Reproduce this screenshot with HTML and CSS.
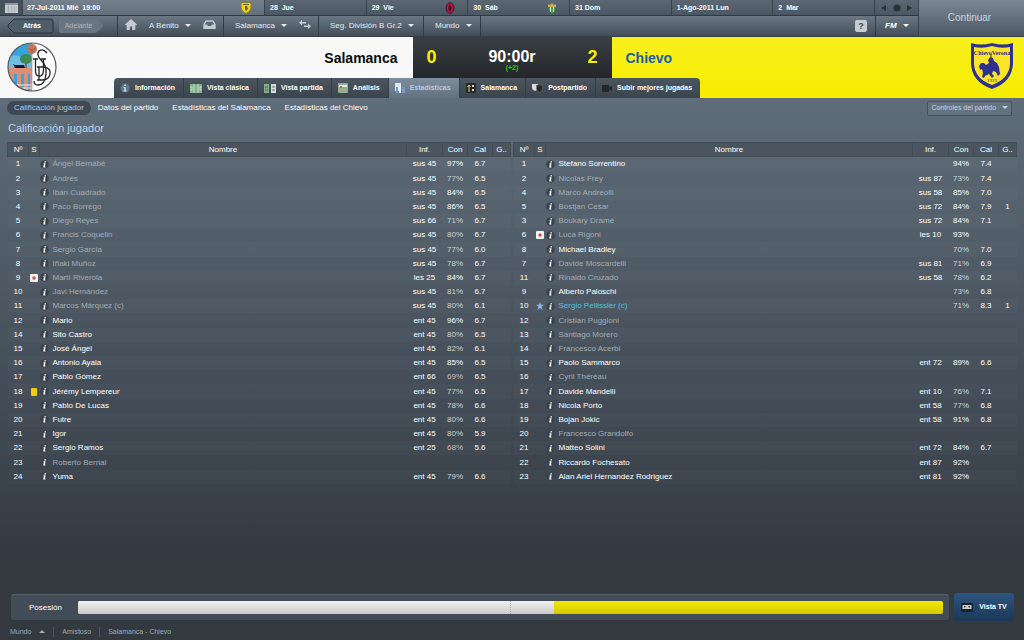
FILE: index.html
```
<!DOCTYPE html>
<html lang="es">
<head>
  <meta charset="UTF-8">
  <title>Salamanca - Chievo</title>
  <link rel="stylesheet" href="styles.css">
</head>
<body>
  <header class="top">
    <div class="top-main">
      <div class="calendar">
        <button class="cal-icon" aria-label="Calendario">
          <svg width="13" height="11" viewBox="0 0 13 11"><path fill="#c9cfd4" d="M0 1h13v10H0z"/><path fill="#8d969e" d="M0 1h13v2H0z"/><path stroke="#a3abb2" stroke-width=".6" d="M1 5h11M1 7h11M1 9h11M3.5 3.5v7M6.5 3.5v7M9.5 3.5v7"/></svg>
        </button>
        <div class="day today">27-Jul-2011 Mié&nbsp; 19:00
          <svg width="12" height="13" viewBox="0 0 12 13"><path fill="#f0d21c" stroke="#8a7a20" d="M1 1.5h10v5q0 4-5 6-5-2-5-6z"/><path fill="#6b6440" d="M3 3h6v1H3zM5 5h2l1 3-2 2-1-2z"/></svg>
        </div>
        <div class="day">28&nbsp; Jue</div>
        <div class="day">29&nbsp; Vie
          <svg width="10" height="12" viewBox="0 0 10 12"><ellipse cx="5" cy="6" rx="4.2" ry="5.5" fill="#c3142e"/><ellipse cx="5" cy="6" rx="4" ry="5.2" fill="none" stroke="#232650"/><ellipse cx="5" cy="6" rx="1.5" ry="3" fill="#1d2045"/></svg>
        </div>
        <div class="day">30&nbsp; Sáb
          <svg width="10" height="12" viewBox="0 0 10 12"><path fill="#3ea33a" d="M1 4h8L7.5 9 5 12 2.5 9z"/><path stroke="#e8eee8" d="M3.5 5v5M6.5 5v5"/><path fill="#c9ad55" d="M1 5V2l2 1 2-2 2 2 2-1v3z"/></svg>
        </div>
        <div class="day">31 Dom</div>
        <div class="day">1-Ago-2011 Lun</div>
        <div class="day">2&nbsp; Mar</div>
        <div class="day-nav">
          <button aria-label="Anterior"><svg width="5" height="6" viewBox="0 0 5 6"><path fill="#2b3238" d="M5 0v6L0 3z"/></svg></button>
          <button aria-label="Hoy"><svg width="8" height="8" viewBox="0 0 8 8"><circle cx="4" cy="4" r="3.5" fill="#2b3034"/></svg></button>
          <button aria-label="Siguiente"><svg width="5" height="6" viewBox="0 0 5 6"><path fill="#2b3238" d="M0 0v6l5-3z"/></svg></button>
        </div>
      </div>

      <nav class="menu">
        <div class="history">
          <button class="back">
            <svg width="47" height="16" viewBox="0 0 47 16"><path fill="#4f5d6b" stroke="#26303a" d="M8.500 1H44q2 0 2 2v10q0 2-2 2H8.500q-2 0-3-1.500L1.500 9.500q-1-1.500 0-3L5.500 2.500q1-1.500 3-1.500z"/></svg>
            <span>Atrás</span>
          </button>
          <button class="forward">
            <svg width="46" height="16" viewBox="0 0 46 16"><path fill="#697682" d="M3 1h33q2 0 3 1l5 4q2 2 0 4l-5 4q-1 1-3 1H3q-2 0-2-2V3q0-2 2-2z"/></svg>
            <span>Adelante</span>
          </button>
        </div>
        <div class="menu-group manager">
          <button aria-label="Inicio"><svg width="12" height="11" viewBox="0 0 12 11"><path fill="#c3cbd3" d="M6 0l6 5.500-1 1-.7-.6V11H7.200V7.500H4.800V11H1.700V5.900l-.7.600-1-1z"/></svg></button>
          <button>A Benito <i class="caret"></i></button>
          <button aria-label="Bandeja"><svg width="13" height="9" viewBox="0 0 13 9"><path fill="none" stroke="#c3cbd3" stroke-width="1.400" d="M1 4.500L3 1h7l2 3.500v3.700H1z"/><path fill="#c3cbd3" d="M1 4.500h3l1 1.500h3l1-1.500h3V8H1z"/></svg></button>
        </div>
        <div class="menu-group club">
          <button>Salamanca <i class="caret"></i></button>
          <button aria-label="Cambiar"><svg width="12" height="9" viewBox="0 0 12 9"><path fill="#c3cbd3" d="M3 0v2h4v1.500H3v2L0 2.700zM9 3.500v2H5V7h4v2l3-2.800z"/></svg></button>
        </div>
        <div class="menu-group league"><button>Seg. División B Gr.2 <i class="caret"></i></button></div>
        <div class="menu-group world"><button>Mundo <i class="caret"></i></button></div>
        <button class="help">?</button>
        <button class="fm">FM <i class="caret"></i></button>
      </nav>
    </div>
    <button class="continue">Continuar</button>
  </header>

  <section class="match">
    <div class="team home">
      <svg class="crest" width="50" height="50" viewBox="0 0 50 50">
        <clipPath id="leftHalf"><path d="M25 1A24 24 0 0 0 25 49z"/></clipPath>
        <circle cx="25" cy="25" r="24" fill="#fff"/>
        <g clip-path="url(#leftHalf)">
          <path fill="#35a4dc" d="M0 0h25v50H0z"/>
          <path fill="#6fbce4" d="M0 16q8-5 14-1t11-3v14H0z"/>
          <path fill="#df8d73" d="M0 26h25v6H0zM3 30h4v14H3zM10 30h4v17h-4zM17 30h4v19h-4zM23 30h2v19h-2z"/>
          <path stroke="#e9f3f8" d="M0 43h25M3 46h22"/>
          <ellipse cx="19" cy="17" rx="6" ry="5" fill="#3d8b52"/>
          <path stroke="#85593f" stroke-width="1.500" d="M19 20v6"/>
          <path fill="#131820" d="M6 22l2 1h9l1 3H8z"/>
        </g>
        <circle cx="25" cy="25" r="24" fill="none" stroke="#56595c" stroke-width="1.200"/>
        <path stroke="#999" stroke-width=".7" d="M25 2v46"/>
        <circle cx="25" cy="7" r="5" fill="#c4785b"/>
        <path fill="none" stroke="#8e4d3a" stroke-width=".6" d="M21 6l4 2 4-2M25 8v4"/>
        <g fill="none" stroke="#222" stroke-width="1.300">
          <path d="M40 11q-4-5-8-2-3 4 2 9 6 6 5 14-1 11-8 11-4 0-4-4"/>
          <path d="M26 17h5M28.500 17v13q1 5 5 4 3-1 3-6V17M34 17h5"/>
          <path d="M32 25v13M30 25h7q7 1 6 7-1 6-8 6h-5"/>
        </g>
      </svg>
      <span class="team-name">Salamanca</span>
    </div>
    <div class="score">
      <span class="goals">0</span>
      <div class="clock">90:00r<small>(+2)</small></div>
      <span class="goals">2</span>
    </div>
    <div class="team away">
      <span class="team-name">Chievo</span>
      <svg class="crest" width="44" height="48" viewBox="0 0 44 48">
        <path fill="#2f3192" d="M1 1q10 3 21 0 11 3 21 0v21Q42 40 22 47 2 40 1 22z"/>
        <path fill="#fbe42a" d="M4 5q9 2 18-1 9 3 18 1v17q-1 15-18 21Q5 37 4 22z"/>
        <text x="22" y="13" text-anchor="middle" class="crest-name">ChievoVerona</text>
        <path fill="#2f3192" d="M20 15l3 1 1 3 3 2 2 4 1 7-2 2-2-4-3-1-1 3 2 2-2 2-3-4-4 2-1 2-2-1 1-4-1-4-2 1-1-4 2-3 3 0 2 2 3-2-1-3z"/>
        <path stroke="#2f3192" d="M21 12v10"/>
        <text x="22" y="40" text-anchor="middle" class="crest-year">1929</text>
      </svg>
    </div>
    <nav class="tabs">
      <a href="#"><svg width="10" height="10" viewBox="0 0 10 10"><circle cx="5" cy="5" r="4.600" fill="#5c748c"/><path fill="#dfe8f0" d="M4.300 1.500h1.500V3H4.300zM3.500 4h2.200v3.500h.8v1h-3v-1h.8V5h-.8z"/></svg>Información</a>
      <a href="#"><svg width="12" height="9" viewBox="0 0 12 9"><path fill="#7fae8a" d="M0 0h12v9H0z"/><path fill="none" stroke="#dbe9de" stroke-width=".8" d="M4 0v9M8 0v9M0 3h2v3H0M12 3h-2v3h2"/></svg>Vista clásica</a>
      <a href="#"><svg width="12" height="9" viewBox="0 0 12 9"><path fill="#7fae8a" d="M0 0h5v9H0z"/><path fill="#d5dadd" d="M7 0h5v9H7z"/><path stroke="#3f4b52" stroke-width=".7" d="M1 3h3M1 6h3M8 3h3M8 6h3"/></svg>Vista partida</a>
      <a href="#"><svg width="10" height="10" viewBox="0 0 10 10"><rect width="10" height="10" rx="1" fill="#8fae92"/><path fill="#dfe8dc" d="M1 2h8v2H1z"/><path fill="none" stroke="#d7a53d" d="M2 8l3-2 3 1"/><circle cx="3" cy="4" r="1" fill="#b44"/></svg>Análisis</a>
      <a href="#" class="active"><svg width="10" height="10" viewBox="0 0 10 10"><path fill="#dce6ef" d="M0 0h6v8H0z"/><path fill="#6f9cc5" d="M1 4h2v6H1zM7 4h3v6H7z"/><path fill="#e9f1f8" d="M4 2h2v8H4z"/></svg>Estadísticas</a>
      <a href="#"><svg width="10" height="10" viewBox="0 0 10 10"><rect width="10" height="10" rx="1" fill="#25292c"/><path fill="none" stroke="#e2cf58" d="M3 9V3M1.500 4L3 2l1.500 2"/><path fill="#d8d8d8" d="M6 2h2v2H6zM6 6h2v2H6z"/></svg>Salamanca</a>
      <a href="#"><svg width="11" height="10" viewBox="0 0 11 10"><path fill="#d9dcde" d="M0 1h6v4q0 2-3 3-3-1-3-3z"/><path fill="#24292d" stroke="#777" stroke-width=".5" d="M4.500 2h6v4q0 2-3 3.500-3-1.500-3-3.500z"/></svg>Postpartido</a>
      <a href="#"><svg width="10" height="7" viewBox="0 0 10 7"><path fill="#23292e" d="M0 0h7v2l3-1v5L7 5v2H0z"/></svg>Subir mejores jugadas</a>
    </nav>
  </section>

  <main>
    <div class="subnav">
      <a href="#" class="active">Calificación jugador</a>
      <a href="#">Datos del partido</a>
      <a href="#">Estadísticas del Salamanca</a>
      <a href="#">Estadísticas del Chievo</a>
      <button class="controls">Controles del partido <i class="caret"></i></button>
    </div>
    <h1>Calificación jugador</h1>
    <div class="tables">
      <table id="home"></table>
      <table id="away"></table>
    </div>
  </main>

  <footer>
    <div class="bottom">
      <div class="possession">
        <span>Posesión</span>
        <div class="bar"><div class="bar-home" style="width: 55%"></div></div>
      </div>
      <button class="tv">
        <svg width="12" height="9" viewBox="0 0 12 9"><rect width="12" height="9" rx="1.500" fill="#1a2025"/><path fill="#c9cdd0" d="M1.500 2h9v4h-9z"/><path fill="#30363b" d="M3 3h1.500v1.500H3zM7.500 3H9v1.500H7.500z"/></svg>
        Vista TV
      </button>
    </div>
    <nav class="crumbs">
      <a href="#">Mundo <i class="caret up"></i></a>
      <a href="#">Amistoso</a>
      <a href="#">Salamanca - Chievo</a>
    </nav>
  </footer>

  <script src="script.js"></script>
</body>
</html>
```
FILE: styles.css
```
* {
  box-sizing: border-box;
}

body {
  margin: 0;
  min-height: 100vh;
  display: flex;
  flex-direction: column;
  font-family: "Liberation Sans", Arial, sans-serif;
  font-size: 8px;
  line-height: 10px;
  color: #fff;
  background: linear-gradient(#606e7b 90px, #5a6773 150px, #3a424b 490px, #32393f 560px, #32393f);
}

button {
  font: inherit;
  color: inherit;
  background: none;
  border: none;
  padding: 0;
  cursor: pointer;
}

a {
  color: inherit;
  text-decoration: none;
}

svg {
  flex: none;
}

.caret {
  display: inline-block;
  border: 3px solid transparent;
  border-top-color: currentColor;
  border-bottom: none;
  margin-left: 4px;
  vertical-align: 1px;
}

.caret.up {
  margin-left: 6px;
  border-top: none;
  border-bottom: 3px solid currentColor;
}

/* top bar */
.top {
  display: flex;
  height: 37px;
  border-bottom: 1px solid #363f48;
}

.top-main {
  flex: 1;
}

.calendar {
  display: flex;
  height: 16px;
  font-size: 7px;
  font-weight: bold;
  background: linear-gradient(#5b6873, #4b5762);
  border-bottom: 1px solid #303942;
}

.cal-icon {
  width: 22px;
  display: flex;
  align-items: center;
  justify-content: center;
  background: #46515c;
}

.day {
  flex: 1;
  display: flex;
  align-items: center;
  justify-content: space-between;
  padding: 0 12px 0 5px;
  border-left: 1px solid #3a444d;
}

.day.today {
  flex: none;
  width: 242px;
  padding-left: 4px;
  background: linear-gradient(#74818d, #64717d);
}

.day-nav {
  width: 44px;
  display: flex;
  align-items: center;
  justify-content: space-evenly;
  border-left: 1px solid #3a444d;
}

.day-nav button {
  display: flex;
}

.menu {
  display: flex;
  align-items: center;
  height: 20px;
  background: linear-gradient(#6b7884, #424d57);
  color: #e6ebef;
}

.history {
  width: 117px;
  display: flex;
  gap: 4px;
  padding-left: 7px;
}

.back,
.forward {
  display: grid;
  align-items: center;
  justify-items: center;
}

.back > *,
.forward > * {
  grid-area: 1 / 1;
}

.back span {
  padding-left: 3px;
  font-weight: bold;
  font-size: 7px;
  color: #fff;
}

.forward span {
  padding-right: 5px;
  font-size: 7px;
  color: #a9b4be;
}

.menu-group {
  height: 20px;
  display: flex;
  align-items: center;
  justify-content: space-between;
  padding: 0 7px;
  border-left: 1px solid #323c45;
}

.menu-group.manager {
  width: 106px;
}

.menu-group.club {
  width: 95px;
  padding-left: 11px;
}

.menu-group.league {
  width: 105px;
  padding-left: 11px;
}

.menu-group.world {
  width: 58px;
  padding-left: 11px;
  border-right: 1px solid #323c45;
}

.help {
  width: 12px;
  height: 12px;
  margin-left: auto;
  margin-right: 8px;
  border-radius: 2px;
  background: #c5ccd2;
  color: #3c464f;
  font-size: 9px;
  font-weight: bold;
}

.fm {
  width: 43px;
  height: 20px;
  border-left: 1px solid #323c45;
  font-style: italic;
  font-weight: bold;
  color: #fff;
}

.continue {
  width: 106px;
  padding: 0 4px 0 0;
  border-left: 1px solid #39434c;
  background: linear-gradient(#7b8894, #4c5863);
  color: #c6d5e4;
  font-size: 10px;
}

/* scoreboard */
.match {
  position: relative;
  display: grid;
  grid-template-columns: 1fr 199px 1fr;
  height: 61px;
}

.team {
  display: flex;
  justify-content: space-between;
}

.team.home {
  padding: 5px 15px 0 7px;
  background: #f8f8f8;
}

.team.away {
  padding: 5px 10px 0 14px;
  background: linear-gradient(#f8f01c, #f7ed00);
}

.team-name {
  padding-top: 7px;
  font-size: 14px;
  line-height: 18px;
  font-weight: bold;
  color: #0c0c0c;
}

.away .team-name {
  color: #1560a8;
}

.crest-name {
  font: bold 6px "Liberation Serif", serif;
  fill: #2f3192;
}

.crest-year {
  font: 5px "Liberation Serif", serif;
  fill: #2f3192;
}

.score {
  display: flex;
  justify-content: space-between;
  padding: 10px 14px 0;
  background: linear-gradient(#3a3f43, #23272a 41px);
  font-size: 16px;
  line-height: 20px;
}

.goals {
  font-size: 18px;
  font-weight: bold;
  color: #fbf000;
}

.clock {
  text-align: center;
  font-weight: bold;
  color: #fff;
}

.clock small {
  display: block;
  font-size: 7px;
  line-height: 2px;
  color: #10d810;
}

.tabs {
  position: absolute;
  left: 114px;
  bottom: 0;
  display: flex;
  height: 20px;
  border-radius: 4px 4px 0 0;
  overflow: hidden;
  background: linear-gradient(#4b5660, #3b444d);
  font-size: 7px;
  font-weight: bold;
}

.tabs a {
  display: flex;
  align-items: center;
  gap: 5px;
  padding: 0 8px 0 6px;
  border-right: 1px solid #353e46;
}

.tabs a:last-child {
  border-right: none;
}

.tabs .active {
  background: linear-gradient(#7d8d9d, #64727f);
  color: #b4cbe2;
}

/* content */
main {
  padding: 0 7px;
}

.subnav {
  display: flex;
  align-items: center;
  height: 20px;
  gap: 14px;
}

.subnav .active {
  margin-right: -7px;
  padding: 2px 7px;
  border-radius: 7px;
  background: #3e4953;
  color: #b4cbe2;
}

.controls {
  height: 15px;
  margin-left: auto;
  margin-right: 5px;
  padding: 0 3px;
  border: 1px solid #46525d;
  border-radius: 2px;
  background: #657380;
  color: #c3d5e8;
  font-size: 7px;
}

h1 {
  margin: 3px 1px 7px;
  font-size: 11px;
  line-height: 14px;
  font-weight: normal;
  color: #bfd5ec;
}

.tables {
  display: grid;
  grid-template-columns: 1fr 1fr;
  gap: 2px;
}

table {
  width: 100%;
  height: 342px;
  table-layout: fixed;
  border-collapse: collapse;
}

th,
td {
  padding: 0;
  text-align: center;
  font-weight: normal;
}

th {
  height: 14px;
  background: #4a555f;
  border: 1px solid #414c55;
}

tbody tr:nth-child(odd) {
  background: rgba(255, 255, 255, 0.02);
}

td svg {
  display: block;
  margin: auto;
}

.num {
  width: 21px;
}

.status {
  width: 11px;
}

.inf {
  width: 36px;
}

.con,
.cal {
  width: 25px;
}

.g {
  width: 18px;
}

td.name > div {
  display: flex;
  align-items: center;
  gap: 4px;
}

td.name svg {
  margin: 0;
}

.off td.name {
  color: #a3adb5;
}

.best td.name {
  color: #4fc0e4;
}

.fit {
  color: #fff;
}

.ok {
  color: #d2d3d5;
}

.tired {
  color: #d8b9b9;
}

/* bottom */
footer {
  margin-top: auto;
  padding: 0 10px 0 11px;
}

.bottom {
  display: flex;
  align-items: center;
  gap: 5px;
}

.possession {
  flex: 1;
  display: flex;
  align-items: center;
  gap: 16px;
  height: 26px;
  padding: 0 6px 0 18px;
  border-top: 1px solid #56636d;
  border-radius: 3px;
  background: #414c57;
}

.bar {
  position: relative;
  flex: 1;
  height: 13px;
  border-radius: 2px;
  overflow: hidden;
  background: linear-gradient(#f3e900, #d2c800);
}

.bar::after {
  content: "";
  position: absolute;
  left: 50%;
  top: 0;
  height: 100%;
  border-left: 1px dotted #aaa;
}

.bar-home {
  height: 100%;
  background: linear-gradient(#f0f0f0, #cacaca);
}

.tv {
  width: 60px;
  height: 28px;
  display: flex;
  align-items: center;
  justify-content: center;
  gap: 6px;
  border-radius: 3px;
  background: linear-gradient(#2d557f, #1b3858);
  color: #fff;
  font-size: 7px;
  font-weight: bold;
}

.crumbs {
  display: flex;
  height: 19px;
  padding-top: 3px;
  align-items: center;
  margin-left: -1px;
  color: #a0abb4;
  font-size: 7px;
}

.crumbs a {
  padding: 0 8px;
  border-left: 1px solid #4a545d;
}

.crumbs a:first-child {
  padding-left: 0;
  border-left: none;
}
```
FILE: script.js
```
// number, name, row class, info, condition, rating, goals, status icon
const home = [
  [1, "Ángel Bernabé", "off", "sus 45", 97, "6.7"],
  [2, "Andrés", "off", "sus 45", 77, "6.5"],
  [3, "Ibán Cuadrado", "off", "sus 45", 84, "6.5"],
  [4, "Paco Borrego", "off", "sus 45", 86, "6.5"],
  [5, "Diego Reyes", "off", "sus 66", 71, "6.7"],
  [6, "Francis Coquelin", "off", "sus 45", 80, "6.7"],
  [7, "Sergio García", "off", "sus 45", 77, "6.0"],
  [8, "Iñaki Muñoz", "off", "sus 45", 78, "6.7"],
  [9, "Martí Riverola", "off", "les 25", 84, "6.7", "", "injury"],
  [10, "Javi Hernández", "off", "sus 45", 81, "6.7"],
  [11, "Marcos Márquez (c)", "off", "sus 45", 80, "6.1"],
  [12, "Mario", "", "ent 45", 96, "6.7"],
  [14, "Sito Castro", "", "ent 45", 80, "6.5"],
  [15, "José Ángel", "", "ent 45", 82, "6.1"],
  [16, "Antonio Ayala", "", "ent 45", 85, "6.5"],
  [17, "Pablo Gómez", "", "ent 66", 69, "6.5"],
  [18, "Jérémy Lempereur", "", "ent 45", 77, "6.5", "", "yellow"],
  [19, "Pablo De Lucas", "", "ent 45", 78, "6.6"],
  [20, "Futre", "", "ent 45", 80, "6.6"],
  [21, "Igor", "", "ent 45", 80, "5.9"],
  [22, "Sergio Ramos", "", "ent 25", 68, "5.6"],
  [23, "Roberto Bernal", "off"],
  [24, "Yuma", "", "ent 45", 79, "6.6"]
];

const away = [
  [1, "Stefano Sorrentino", "", "", 94, "7.4"],
  [2, "Nicolas Frey", "off", "sus 87", 73, "7.4"],
  [4, "Marco Andreolli", "off", "sus 58", 85, "7.0"],
  [5, "Bostjan Cesar", "off", "sus 72", 84, "7.9", 1],
  [3, "Boukary Dramé", "off", "sus 72", 84, "7.1"],
  [6, "Luca Rigoni", "off", "les 10", 93, "", "", "knock"],
  [8, "Michael Bradley", "", "", 70, "7.0"],
  [7, "Davide Moscardelli", "off", "sus 81", 71, "6.9"],
  [11, "Rinaldo Cruzado", "off", "sus 58", 78, "6.2"],
  [9, "Alberto Paloschi", "", "", 73, "6.8"],
  [10, "Sergio Pellissier (c)", "best", "", 71, "8.3", 1, "star"],
  [12, "Cristian Puggioni", "off"],
  [13, "Santiago Morero", "off"],
  [14, "Francesco Acerbi", "off"],
  [15, "Paolo Sammarco", "", "ent 72", 89, "6.6"],
  [16, "Cyril Théréau", "off"],
  [17, "Davide Mandelli", "", "ent 10", 76, "7.1"],
  [18, "Nicola Porto", "", "ent 58", 77, "6.8"],
  [19, "Bojan Jokic", "", "ent 58", 91, "6.8"],
  [20, "Francesco Grandolfo", "off"],
  [21, "Matteo Solini", "", "ent 72", 84, "6.7"],
  [22, "Riccardo Fochesato", "", "ent 87", 92],
  [23, "Alan Ariel Hernandez Rodriguez", "", "ent 81", 92]
];

const icons = {
  injury: '<svg width="8" height="8" viewBox="0 0 8 8"><rect width="8" height="8" rx="1" fill="#f2f2f2"/><path stroke="#c22" d="M4 2v4M2 4h4"/></svg>',
  knock: '<svg width="8" height="8" viewBox="0 0 8 8"><rect width="8" height="8" rx="1" fill="#f2f2f2"/><circle cx="4" cy="4" r="1.6" fill="#d33"/></svg>',
  yellow: '<svg width="6" height="8" viewBox="0 0 6 8"><rect width="6" height="8" rx="1" fill="#f0cc10"/></svg>',
  star: '<svg width="8" height="8" viewBox="0 0 8 8"><path fill="#86b8ee" d="M4 0l1 2.8h3L5.6 4.6 6.5 8 4 6 1.5 8l.9-3.4L0 2.8h3z"/></svg>',
  info: '<svg width="9" height="9" viewBox="0 0 9 9"><circle cx="4.5" cy="4.5" r="4.3" fill="#3a434c"/><path fill="#fff" d="M4.6 1.3h1.500l-.3 1.200H4.300zM3.600 3.300h2L4.900 6.600l.7.100-.1.700H3.200l.7-3.400h-.5z"/></svg>'
};

function level(con) {
  if (con >= 84) return "fit";
  return con < 70 ? "tired" : "ok";
}

function fill(id, players) {
  const rows = players.map(([num, name, state, inf = "", con, cal = "", goals = "", icon]) => `
    <tr class="${state}">
      <td>${num}</td>
      <td>${icon ? icons[icon] : ""}</td>
      <td class="name"><div>${icons.info}${name}</div></td>
      <td>${inf}</td>
      <td class="${level(con)}">${con ? con + "%" : ""}</td>
      <td>${cal}</td>
      <td>${goals}</td>
    </tr>`);

  document.getElementById(id).innerHTML = `
    <thead><tr>
      <th class="num">Nº</th><th class="status">S</th><th class="name">Nombre</th>
      <th class="inf">Inf.</th><th class="con">Con</th><th class="cal">Cal</th><th class="g">G..</th>
    </tr></thead>
    <tbody>${rows.join("")}</tbody>`;
}

fill("home", home);
fill("away", away);
```
